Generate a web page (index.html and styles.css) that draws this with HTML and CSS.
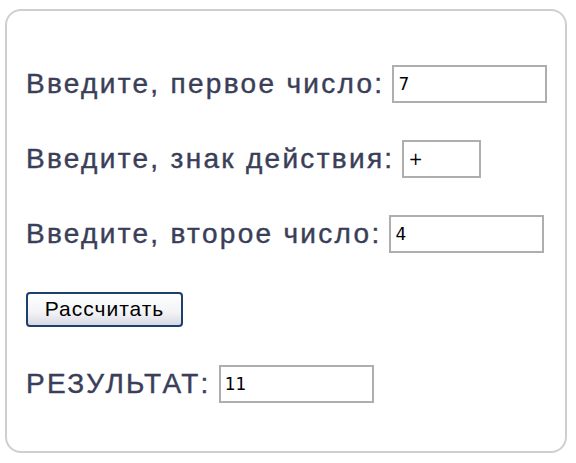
FILE: index.html
```html
<!DOCTYPE html>
<html lang="ru">
<head>
  <meta charset="UTF-8">
  <title>Калькулятор</title>
  <link rel="stylesheet" href="styles.css">
</head>
<body>
  <form class="calc" id="calcForm">
    <div class="row">
      <label for="a">Введите, первое число:</label>
      <input type="text" id="a" class="field wide" value="7">
    </div>
    <div class="row">
      <label for="op">Введите, знак действия:</label>
      <input type="text" id="op" class="field short" value="+">
    </div>
    <div class="row">
      <label for="b">Введите, второе число:</label>
      <input type="text" id="b" class="field wide" value="4">
    </div>
    <div class="row">
      <button type="submit" class="btn">Рассчитать</button>
    </div>
    <div class="row">
      <label for="res">РЕЗУЛЬТАТ:</label>
      <input type="text" id="res" class="field wide" value="11">
    </div>
  </form>
</body>
</html>
```

FILE: styles.css
```css
body { margin: 0; background: #fff; font-family: "Liberation Sans", Arial, sans-serif; }
.calc { box-sizing: border-box; width: 562px; height: 444px; margin: 9px 0 0 5px; padding: 54px 19px 0; border: 2px solid #cfcfcf; border-radius: 16px; display: flex; flex-direction: column; gap: 37px; }
.row { display: flex; align-items: center; height: 38px; }
label { flex-shrink: 0; white-space: nowrap; font-size: 28px; letter-spacing: 2.3px; color: #3a3e58; margin-right: 8px; -webkit-text-stroke: 0.4px #3a3e58; }
.field { flex-shrink: 0; box-sizing: border-box; height: 38px; border: 2px solid #aeaeae; padding: 2px 4px; font-family: "DejaVu Sans", sans-serif; font-size: 17px; color: #000; }
.wide { width: 155px; }
.short { width: 79px; }
.btn { box-sizing: border-box; width: 157px; height: 35px; padding: 0; border: 2px solid #1d3f6b; border-radius: 4px; background: linear-gradient(#ffffff, #f3f3f6 60%, #d8d8e4); font-family: "Liberation Sans", Arial, sans-serif; font-size: 21px; letter-spacing: 1px; color: #000; }
```
